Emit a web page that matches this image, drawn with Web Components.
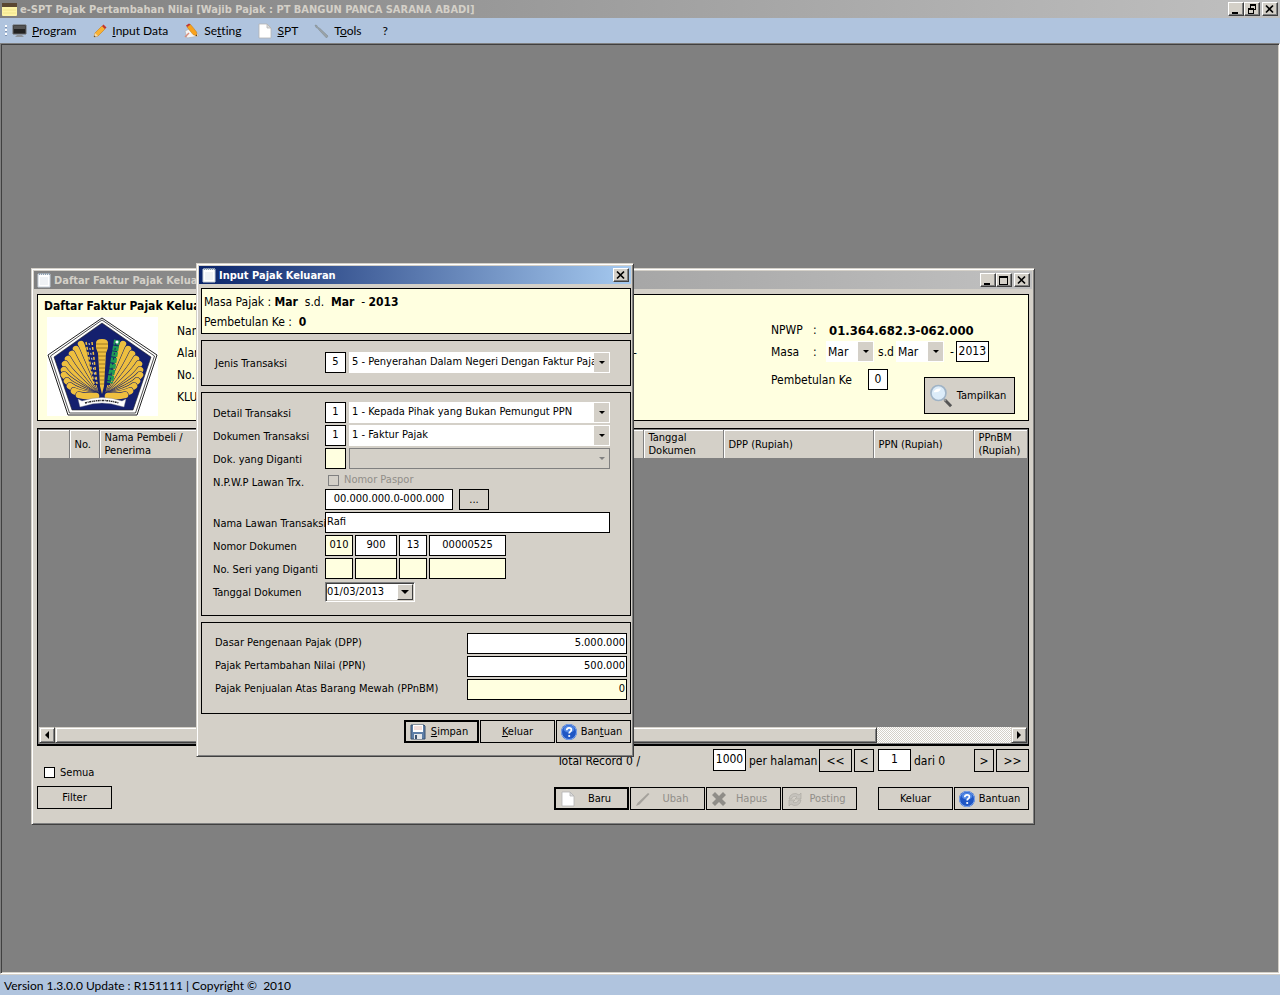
<!DOCTYPE html>
<html lang="id">
<head>
<meta charset="utf-8">
<title>e-SPT Pajak Pertambahan Nilai</title>
<style>
  body {
    margin: 0;
    font-family: "DejaVu Sans Condensed", Roboto, sans-serif;
    font-size: 11px;
    color: #000;
  }
</style>
</head>
<body>
<spt-app></spt-app>

<script>
const ICONS = {
  app: `<rect x="0" y="2" width="15" height="13" rx="1" fill="#fdf3a4"/><path d="M0 2h15v4H0z" fill="#5a4630"/><path d="M1 9h13M1 12h13" stroke="#f0e48c"/>`,
  notepad: `<path d="M2 2h12v13H2z" fill="#fff" stroke="#c6d0da"/><path d="M3.500 1v2M5.500 1v2M7.500 1v2M9.500 1v2M11.500 1v2M13.500 1v2" stroke="#8fa0b0"/><path d="M4 6h8M4 8h8M4 10h8M4 12h8" stroke="#dfe5eb"/>`,
  program: `<path d="M1 2h13v9H1z" fill="#222" stroke="#666"/><path d="M2 3h11v3H2z" fill="#555"/><path d="M5 12h5l2 2H3z" fill="#8f959c"/>`,
  pencil: `<path d="M2 14l1-4 7-7 3 3-7 7z" fill="#f9b233" stroke="#c77f1a" stroke-width=".6"/><path d="M2 14l1-4 3 3z" fill="#f3dcb2"/><path d="M2 14l.4-1.6 1.2 1.2z" fill="#222"/><path d="M10 3l1.500-1.500 3 3L13 6z" fill="#c5352b"/>`,
  setting: `<path d="M1 8l8-4 6 9-12 2z" fill="#f4f4f4" stroke="#aaa" stroke-width=".6"/><path d="M13 13l-4-1.500L3 4l3.500-2.500L12.500 9z" fill="#f9a21a" stroke="#c77f1a" stroke-width=".6"/><path d="M3 4l3.500-2.500L5 .5 2 2.500z" fill="#c5352b"/><path d="M13 13l-1.500-.4 1.200-1.200z" fill="#222"/><path d="M1 14l4-4" stroke="#d98c7a" stroke-width="1.500"/>`,
  page: `<path d="M2 1h8l4 4v10H2z" fill="#fff" stroke="#b4b4b4" stroke-width=".8"/><path d="M10 1v4h4z" fill="#ddd" stroke="#b4b4b4" stroke-width=".8"/>`,
  wrench: `<path d="M1 2l2 .5L3.500 4 6 5.500 14 13l-1.500 2L5 7 3.500 5 2 4.500z" fill="#9aa3a8" stroke="#7d868b" stroke-width=".5"/>`,
  help: `<circle cx="8" cy="8" r="8" fill="#1f56c4"/><circle cx="8" cy="8" r="7.500" fill="none" stroke="#7ea7ee"/><ellipse cx="8" cy="5" rx="5.500" ry="3.500" fill="#4f86e3"/><path d="M5.700 6.200q.2-2.400 2.400-2.400 2.300 0 2.300 2 0 1.200-1.200 1.900-1 .6-1 1.700" fill="none" stroke="#fff" stroke-width="1.700"/><circle cx="8.200" cy="12" r="1.100" fill="#fff"/>`,
  floppy: `<path d="M1 1h13l1 1v13H1z" fill="#5d7fa8" stroke="#3b5270"/><path d="M3 1h10v7H3z" fill="#fff"/><path d="M4 3h8M4 5h8" stroke="#e6bdb6"/><path d="M4 10h8v5H4z" fill="#e4e7ea"/><path d="M5 11h2v4H5z" fill="#3b5270"/>`,
  edit: `<path d="M1 15l1.500-3L13 2l1.500 1L4.500 13.500z" fill="#a5a29c"/>`,
  cross: `<path d="M1 4l3-3 4 4 4-4 3 3-4 4 4 4-3 3-4-4-4 4-3-3 4-4z" fill="#8f8d88"/>`,
  posting: `<path d="M2 8a6 6 0 0 1 10-4l2-2v6H8l2-2a3.500 3.500 0 0 0-5.500 2zM14 9a6 6 0 0 1-10 4l-2 2V9h6l-2 2a3.500 3.500 0 0 0 5.500-2z" fill="#c6c3bd" stroke="#a9a6a0" stroke-width=".6"/>`,
  search: `<path d="M10.500 10.500l4.200 4.300" stroke="#555" stroke-width="2"/><path d="M10 10l1.200 1.200" stroke="#999" stroke-width="1.200"/><circle cx="6.300" cy="6" r="5" fill="#dcecf9" stroke="#9fb3c6" stroke-width="1.100"/><path d="M3 5.500Q4 2.500 8 3q-1 3-5 2.500z" fill="#fff"/>`
};

class SptIcon extends HTMLElement {
  constructor() {
    super();
    this.attachShadow({mode: 'open'});
  }

  connectedCallback() {
    this.shadowRoot.innerHTML = `
      <style>
        :host { display: block; flex: none; width: 16px; height: 16px; white-space: normal; }
        svg { display: block; width: 100%; height: 100%; }
      </style>
      <svg viewBox="0 0 16 16" aria-hidden="true">${ICONS[this.getAttribute('name')]}</svg>
    `;
  }
}

// Coat of arms shown beside the taxpayer's data
class SptEmblem extends HTMLElement {
  constructor() {
    super();
    this.attachShadow({mode: 'open'});
  }

  connectedCallback() {
    // tips of the feathers of the left wing, from the top down
    const tips = [[34, 27], [29, 32], [25, 37], [21, 42], [18, 47], [17, 53], [17, 58], [20, 64], [23, 69], [27, 74], [32, 78]];
    const feathers = tips.map(([x, y]) => {
      const d = `M49 79Q${x + 6} ${y + 22 - Math.round(y / 4)} ${x} ${y}`;
      return `<path d="${d}" stroke="#14206e" stroke-width="7.500"/><path d="${d}" stroke="#eebf3f" stroke-width="6.500"/>`;
    }).join('');

    this.shadowRoot.innerHTML = `
      <style>
        :host { display: block; flex: none; width: 111px; height: 99px; background: #fff; }
        svg { display: block; width: 100%; height: 100%; }
      </style>
      <svg viewBox="0 0 111 99" aria-hidden="true">
        <path d="M55 1l55 37-20 60H21L1 38z" fill="#fff" stroke="#222"/>
        <path d="M55 3l52.500 36-19 57H22.500L3.500 39z" fill="#fff" stroke="#222" stroke-width=".8"/>
        <path d="M55 6l49 34-18 53H25L7 40z" fill="#14206e" stroke="#222" stroke-width=".6"/>
        <g id="wing" fill="none" stroke-linecap="round">${feathers}</g>
        <use href="#wing" transform="matrix(-1 0 0 1 110 0)"/>
        <path d="M37 22h13l2 46h-5z" fill="#14206e"/>
        <path d="M73 22H60l-2 46h5z" fill="#14206e"/>
        <path d="M39 25l8 42M45 25l5 42" fill="none" stroke="#eebf3f" stroke-width="1.500" stroke-dasharray="3 2"/>
        <path d="M42 26l7 40" fill="none" stroke="#fff" stroke-width=".8" stroke-dasharray="2 3"/>
        <path d="M49 26q0-4 6-4t6 4v5l-2 5-2 33-2 8-2-8-2-33-2-5z" fill="#eebf3f"/>
        <path d="M49 27h12M49 31h12M51 35h8M51 39h8M52 43h6M52 47h6M52 51h6M52 55h6M52 59h6M53 63h4M53 67h4" stroke="#8a6a1c" stroke-width=".8"/>
        <path d="M70 23l-7 43" stroke="#1f9b54" stroke-width="6" stroke-dasharray="5 1"/>
        <path d="M69 26l-6 38" stroke="#14206e" stroke-dasharray="2 3"/>
        <circle cx="70" cy="25" r="1.500" fill="#fff"/>
        <path d="M31 82l4 2q20-7 40 0l4-2-2 8-4-1q-18-6-36 0l-4 1z" fill="#fff" stroke="#888" stroke-width=".4"/>
        <path d="M38 86q17-5 34 0" fill="none" stroke="#222" stroke-width="1.500" stroke-dasharray="2 .7 1 .6"/>
      </svg>
    `;
  }
}

class SptButton extends HTMLElement {
  constructor() {
    super();
    this.attachShadow({mode: 'open'});
  }

  connectedCallback() {
    const icon = this.getAttribute('icon');
    this.shadowRoot.innerHTML = `
      <style>
        :host { display: block; flex: none; width: 75px; height: 23px; }
        button {
          display: flex;
          align-items: center;
          justify-content: center;
          width: 100%;
          height: 100%;
          padding: 0 4px;
          border: 1px solid #000;
          border-radius: 0;
          background: #d4d0c8;
          color: inherit;
          font: inherit;
          white-space: nowrap;
        }
        button:disabled { color: #918e88; }
        :host([default]) button { border-width: 2px; }
        span { flex: 1; text-align: center; }
        spt-icon { width: var(--icon-size, 16px); height: var(--icon-size, 16px); }
      </style>
      <button type="button" ${this.hasAttribute('disabled') ? 'disabled' : ''}>
        ${icon ? `<spt-icon name="${icon}"></spt-icon>` : ''}<span><slot></slot></span>
      </button>
    `;
  }
}

class SptTitleBar extends HTMLElement {
  constructor() {
    super();
    this.attachShadow({mode: 'open'});
  }

  connectedCallback() {
    const glyphs = {
      minimize: '<path d="M3 9h6v2H3z"/>',
      maximize: '<path d="M2 2h9v9H2zM3 4h7v6H3z" fill-rule="evenodd"/>',
      restore: '<path d="M5 1h6v6H9v4H3V5h2zM6 3v2h3v1h1V3zM4 7v3h4V7z" fill-rule="evenodd"/>',
      close: '<path d="M3 2.500l7 7M10 2.500l-7 7" stroke="#000" stroke-width="1.700"/>'
    };
    const buttons = this.getAttribute('buttons').split(' ').map(name => `
      <button type="button" class="${name}" aria-label="${name}">
        <svg viewBox="0 0 13 12" aria-hidden="true">${glyphs[name]}</svg>
      </button>`).join('');

    this.shadowRoot.innerHTML = `
      <style>
        :host {
          display: flex;
          align-items: center;
          height: 18px;
          padding: 0 2px;
          background: linear-gradient(to right, #808080, #c0c0c0);
          color: #d4d0c8;
          font-weight: bold;
        }
        :host([active]) { background: linear-gradient(to right, #0a246a, #a6caf0); color: #fff; }
        .caption { flex: 1; margin-left: 2px; white-space: nowrap; overflow: hidden; }
        button {
          box-sizing: border-box;
          width: 16px;
          height: 14px;
          padding: 0;
          border: 1px solid;
          border-color: #fff #404040 #404040 #fff;
          background: #d4d0c8;
          box-shadow: inset -1px -1px #808080;
        }
        .close { margin-left: 2px; }
        svg { display: block; width: 13px; height: 12px; }
      </style>
      <spt-icon name="${this.getAttribute('icon')}"></spt-icon>
      <span class="caption"><slot></slot></span>
      ${buttons}
    `;
  }
}

class SptWindow extends HTMLElement {
  constructor() {
    super();
    this.attachShadow({mode: 'open'});
  }

  connectedCallback() {
    this.shadowRoot.innerHTML = `
      <style>
        :host {
          display: block;
          box-sizing: border-box;
          padding: 1px;
          border: 1px solid;
          border-color: #d4d0c8 #404040 #404040 #d4d0c8;
          background: #d4d0c8;
          box-shadow: inset 1px 1px #fff, inset -1px -1px #808080;
        }
        spt-title-bar { margin: 1px; }
        .body { padding: var(--inset, 4px); }
      </style>
      <spt-title-bar icon="notepad" buttons="${this.getAttribute('buttons')}" ${this.hasAttribute('active') ? 'active' : ''}>${this.getAttribute('caption')}</spt-title-bar>
      <div class="body"><slot></slot></div>
    `;
  }
}

class SptMenuBar extends HTMLElement {
  constructor() {
    super();
    this.attachShadow({mode: 'open'});
  }

  connectedCallback() {
    this.shadowRoot.innerHTML = `
      <style>
        :host {
          display: flex;
          align-items: center;
          gap: 16px;
          height: 25px;
          padding: 0 5px;
          background: #b0c4de;
          font-family: Lato, "Noto Sans", sans-serif;
          font-size: 12px;
          font-variant-ligatures: none;
        }
        .grip { width: 2px; height: 12px; margin-right: -11px; background: repeating-linear-gradient(#fff 0 2px, #8296b4 2px 3px, transparent 3px 4px); }
        a { display: flex; align-items: center; gap: 4px; color: inherit; text-decoration: none; white-space: nowrap; }
        .help { padding-left: 5px; }
      </style>
      <span class="grip"></span>
      <a href="#program"><spt-icon name="program"></spt-icon><span><u>P</u>rogram</span></a>
      <a href="#input"><spt-icon name="pencil"></spt-icon><span><u>I</u>nput Data</span></a>
      <a href="#setting"><spt-icon name="setting"></spt-icon><span>Se<u>t</u>ting</span></a>
      <a href="#spt"><spt-icon name="page"></spt-icon><span><u>S</u>PT</span></a>
      <a href="#tools"><spt-icon name="wrench"></spt-icon><span>T<u>o</u>ols</span></a>
      <a class="help" href="#help">?</a>
    `;
  }
}

// Shared by the two forms; each one puts it into its own shadow root
const fieldStyles = `
  .panel { box-sizing: border-box; border: 1px solid #000; }
  .info { background: #ffffe0; font-size: 12px; }
  input, select {
    box-sizing: border-box;
    height: 21px;
    margin: 0;
    padding: 0 1px 2px;
    border: 1px solid #000;
    border-radius: 0;
    background: #fff;
    color: #000;
    font: inherit;
    min-width: 0;
  }
  input[readonly] { background: #ffffe0; }
  input[type="checkbox"] {
    appearance: none;
    flex: none;
    width: 11px;
    height: 11px;
    padding: 0;
  }
  input[type="checkbox"]:disabled { border-color: #808080; background: transparent; }
  .center { text-align: center; }
  .right { text-align: right; }
  .combo { display: grid; grid-template-columns: minmax(0, 1fr) 16px; height: 21px; background: #fff; }
  .combo select {
    grid-area: 1 / 1;
    width: 100%;
    height: 19px;
    padding: 0 0 0 3px;
    border: 0;
    appearance: none;
    background: transparent;
    line-height: 18px;
  }
  .combo::after { content: ""; grid-area: 1 / 2; margin: 1px 1px 1px 0; background: #d4d0c8; }
  .combo i {
    grid-area: 1 / 2;
    z-index: 1;
    place-self: center;
    border: solid transparent;
    border-width: 3px 3px 0;
    border-top-color: #000;
    pointer-events: none;
  }
  .combo.off { background: #d4d0c8; box-shadow: inset 0 0 0 1px #808080; }
  .combo.off::after { background: transparent; }
  .combo.off i { border-top-color: #808080; }
`;

class FakturForm extends HTMLElement {
  constructor() {
    super();
    this.attachShadow({mode: 'open'});
  }

  connectedCallback() {
    this.shadowRoot.innerHTML = `
      <style>
        ${fieldStyles}
        :host { display: flex; flex-direction: column; gap: 6px; }
        .info { height: 46px; padding: 3px 2px 1px; line-height: 20px; }
        .info p { margin: 0; white-space: pre; }
        .fields {
          display: grid;
          grid-template-columns: 112px minmax(0, 1fr);
          grid-auto-rows: minmax(23px, auto);
          align-items: start;
          padding: 9px 20px 11px 11px;
          line-height: 24px;
        }
        .single { grid-template-columns: 110px minmax(0, 1fr); padding: 11px 20px 10px 13px; }
        .fields label { height: 23px; white-space: nowrap; }
        .line { display: flex; gap: 3px; height: 23px; align-items: flex-start; }
        .line .combo { flex: 1; }
        .code { width: 21px; }
        .serial { gap: 2px; }
        .serial input:nth-child(odd) { width: 28px; padding: 0 0 2px; }
        .serial input:nth-child(2) { width: 42px; }
        .serial input:nth-child(4) { width: 77px; }
        .fields .passport { display: flex; align-items: center; gap: 5px; height: 18px; padding-left: 3px; line-height: 18px; color: #918e88; }
        .npwp { gap: 6px; }
        .npwp input { width: 128px; }
        .npwp spt-button { width: 30px; height: 21px; }
        .wide { flex: 1; }
        .date {
          display: flex;
          box-sizing: border-box;
          width: 90px;
          height: 20px;
          margin-top: 1px;
          border: 1px solid;
          border-color: #808080 #fff #fff #808080;
          background: #fff;
          box-shadow: inset 1px 1px #404040, inset -1px -1px #d4d0c8;
        }
        .date input { flex: 1; height: 18px; padding-bottom: 0; border: 0; background: transparent; }
        .date button {
          display: grid;
          place-items: center;
          width: 16px;
          margin: 1px;
          padding: 0;
          border: 1px solid;
          border-color: #fff #404040 #404040 #fff;
          background: #d4d0c8;
        }
        .date button::before { content: ""; border: solid transparent; border-width: 4px 4px 0; border-top-color: #000; }
        .amounts { grid-template-columns: minmax(0, 1fr) 160px; padding: 10px 3px 11px 13px; line-height: 19px; }
        .amounts input { width: 100%; }
        .actions { display: flex; justify-content: flex-end; gap: 1px; }
      </style>
      <div class="panel info">
        <p>Masa Pajak : <b>Mar</b>  s.d.  <b>Mar</b>  - <b>2013</b></p>
        <p>Pembetulan Ke :  <b>0</b></p>
      </div>

      <div class="panel fields single">
        <label for="jenis">Jenis Transaksi</label>
        <div class="line">
          <input class="code center" id="jenis" value="5">
          <span class="combo"><select aria-label="Jenis Transaksi"><option>5 - Penyerahan Dalam Negeri Dengan Faktur Pajak</option></select><i></i></span>
        </div>
      </div>

      <div class="panel fields">
        <label for="detail">Detail Transaksi</label>
        <div class="line">
          <input class="code center" id="detail" value="1">
          <span class="combo"><select aria-label="Detail Transaksi"><option>1 - Kepada Pihak yang Bukan Pemungut PPN</option></select><i></i></span>
        </div>
        <label for="dokumen">Dokumen Transaksi</label>
        <div class="line">
          <input class="code center" id="dokumen" value="1">
          <span class="combo"><select aria-label="Dokumen Transaksi"><option>1 - Faktur Pajak</option></select><i></i></span>
        </div>
        <label for="diganti">Dok. yang Diganti</label>
        <div class="line">
          <input class="code center" id="diganti" readonly>
          <span class="combo off"><select aria-label="Dok. yang Diganti" disabled></select><i></i></span>
        </div>
        <label for="npwp">N.P.W.P Lawan Trx.</label>
        <div>
          <label class="passport"><input type="checkbox" disabled>Nomor Paspor</label>
          <div class="line npwp">
            <input class="center" id="npwp" value="00.000.000.0-000.000">
            <spt-button>...</spt-button>
          </div>
        </div>
        <label for="nama">Nama Lawan Transaksi</label>
        <div class="line"><input class="wide" id="nama" value="Rafi"></div>
        <label for="nomor">Nomor Dokumen</label>
        <div class="line serial">
          <input class="center" id="nomor" value="010" readonly>
          <input class="center" value="900" aria-label="Kode cabang">
          <input class="center" value="13" aria-label="Tahun">
          <input class="center" value="00000525" aria-label="Nomor urut">
        </div>
        <label for="seri">No. Seri yang Diganti</label>
        <div class="line serial">
          <input id="seri" readonly>
          <input readonly aria-label="Kode cabang diganti">
          <input readonly aria-label="Tahun diganti">
          <input readonly aria-label="Nomor urut diganti">
        </div>
        <label for="tanggal">Tanggal Dokumen</label>
        <div class="line">
          <span class="date"><input id="tanggal" value="01/03/2013"><button type="button" aria-label="Pilih tanggal"></button></span>
        </div>
      </div>

      <div class="panel fields amounts">
        <label for="dpp">Dasar Pengenaan Pajak (DPP)</label>
        <input class="right" id="dpp" value="5.000.000">
        <label for="ppn">Pajak Pertambahan Nilai (PPN)</label>
        <input class="right" id="ppn" value="500.000">
        <label for="ppnbm">Pajak Penjualan Atas Barang Mewah (PPnBM)</label>
        <input class="right" id="ppnbm" value="0" readonly>
      </div>

      <div class="actions">
        <spt-button icon="floppy" default><u>S</u>impan</spt-button>
        <spt-button><u>K</u>eluar</spt-button>
        <spt-button icon="help">Ban<u>t</u>uan</spt-button>
      </div>
    `;
  }
}

class FakturList extends HTMLElement {
  constructor() {
    super();
    this.attachShadow({mode: 'open'});
  }

  connectedCallback() {
    this.shadowRoot.innerHTML = `
      <style>
        ${fieldStyles}
        :host { display: flex; flex-direction: column; }
        .info { height: 127px; padding: 2px 13px 0 9px; }
        h2 { margin: 0 0 2px -3px; font-size: 12px; line-height: 18px; }
        .head { display: flex; }
        .head input { padding-bottom: 1px; }
        .taxpayer { display: grid; grid-template-columns: 60px 400px; grid-auto-rows: 22px; margin: 3px 0 0 19px; line-height: 22px; }
        .taxpayer span:nth-child(even) { text-align: right; }
        .filter { width: 244px; margin: 2px 0 0 auto; line-height: 23px; white-space: nowrap; }
        .row { display: flex; height: 22px; }
        .row .key { width: 42px; }
        .row .colon { width: 13px; }
        .row .npwp { margin-left: 3px; font-size: 13px; }
        .row .combo { width: 48px; margin-right: 4px; }
        .row .combo select { height: 21px; padding-left: 2px; }
        .row .combo + span { margin-right: 2px; }
        .row .dash { margin-left: 2px; }
        .row input { width: 33px; }
        .bottom { display: flex; justify-content: space-between; align-items: flex-start; margin-top: 6px; }
        .bottom label { display: flex; gap: 16px; line-height: 22px; }
        .bottom input { width: 20px; }
        .bottom spt-button { width: 91px; height: 37px; margin-top: 8px; font-size: 11px; --icon-size: 24px; }

        .grid { display: flex; flex-direction: column; height: 318px; margin-top: 7px; padding: 1px; box-sizing: border-box; border: 1px solid #000; border-bottom-width: 2px; background: #808080; }
        table { width: 100%; table-layout: fixed; border-collapse: collapse; }
        th {
          box-sizing: border-box;
          height: 28px;
          padding: 0 5px;
          background: #d4d0c8;
          border-right: 1px solid #808080;
          box-shadow: inset 1px 1px #fff;
          font-weight: normal;
          line-height: 13px;
          text-align: left;
          white-space: nowrap;
        }
        th:last-child { border-right: 0; }
        .scroll { display: flex; height: 16px; margin-top: auto; background: repeating-conic-gradient(#fff 0 25%, #d4d0c8 0 50%) 0 0 / 2px 2px; }
        .scroll button, .thumb {
          display: grid;
          place-items: center;
          box-sizing: border-box;
          width: 16px;
          padding: 0;
          border: 1px solid;
          border-color: #d4d0c8 #404040 #404040 #d4d0c8;
          background: #d4d0c8;
          box-shadow: inset 1px 1px #fff, inset -1px -1px #808080;
        }
        .scroll .thumb { width: 822px; margin-right: auto; }
        .scroll button::before { content: ""; border: solid transparent; border-width: 4px 0 4px 4px; border-left-color: #000; }
        .scroll .prev::before { border-width: 4px 4px 4px 0; border-right-color: #000; }

        .foot { display: flex; justify-content: space-between; padding-top: 3px; }
        .left { padding-top: 16px; }
        .all { display: flex; align-items: center; gap: 5px; height: 14px; margin: 0 0 7px 7px; }
        .right-side { width: 475px; }
        .pager { display: flex; align-items: flex-start; height: 38px; font-size: 12px; line-height: 24px; white-space: nowrap; }
        .pager input { width: 33px; height: 22px; margin-right: 3px; }
        .pager .total { flex: 1; padding-left: 3px; }
        .pager .per { width: 70px; }
        .pager .of { width: 60px; }
        .pager spt-button { width: 20px; margin-left: 2px; }
        .pager spt-button.far { width: 33px; }
        .pager .per + spt-button { margin-left: 0; }
        .pager spt-button + input { margin-left: 4px; }
        .pager .of + spt-button { margin-left: 0; }
        .actions { display: flex; gap: 1px; }
        .actions .gap { flex: 1; }
      </style>
      <div class="panel info">
        <h2>Daftar Faktur Pajak Keluaran</h2>
        <div class="head">
          <spt-emblem></spt-emblem>
          <div class="taxpayer">
            <span>Nama</span><span></span>
            <span>Alamat</span><span>-</span>
            <span>No. Telp</span><span></span>
            <span>KLU</span><span></span>
          </div>
          <div class="filter">
            <div class="row"><span class="key">NPWP</span><span class="colon">:</span><b class="npwp">01.364.682.3-062.000</b></div>
            <div class="row">
              <span class="key">Masa</span><span class="colon">:</span>
              <span class="combo"><select aria-label="Masa awal"><option>Mar</option></select><i></i></span>
              <span>s.d</span>
              <span class="combo"><select aria-label="Masa akhir"><option>Mar</option></select><i></i></span>
              <span class="dash">-</span>
              <input class="center" value="2013" aria-label="Tahun">
            </div>
            <div class="bottom">
              <label>Pembetulan Ke <input class="center" value="0"></label>
              <spt-button icon="search">Tampilkan</spt-button>
            </div>
          </div>
        </div>
      </div>

      <div class="grid">
        <table>
          <colgroup>
            <col style="width: 30px"><col style="width: 30px"><col>
            <col style="width: 80px"><col style="width: 150px"><col style="width: 100px"><col style="width: 54px">
          </colgroup>
          <thead>
            <tr>
              <th></th><th>No.</th><th>Nama Pembeli /<br>Penerima</th><th>Tanggal<br>Dokumen</th>
              <th>DPP (Rupiah)</th><th>PPN (Rupiah)</th><th>PPnBM<br>(Rupiah)</th>
            </tr>
          </thead>
          <tbody></tbody>
        </table>
        <div class="scroll">
          <button type="button" class="prev" aria-label="Geser kiri"></button>
          <span class="thumb"></span>
          <button type="button" aria-label="Geser kanan"></button>
        </div>
      </div>

      <div class="foot">
        <div class="left">
          <label class="all"><input type="checkbox">Semua</label>
          <spt-button>Filter</spt-button>
        </div>
        <div class="right-side">
          <div class="pager">
            <span class="total">Total Record 0 /</span>
            <input class="center" id="size" value="1000">
            <label class="per" for="size">per halaman</label>
            <spt-button class="far">&lt;&lt;</spt-button>
            <spt-button>&lt;</spt-button>
            <input class="center" id="page" value="1">
            <label class="of" for="page">dari 0</label>
            <spt-button>&gt;</spt-button>
            <spt-button class="far">&gt;&gt;</spt-button>
          </div>
          <div class="actions">
            <spt-button icon="page" default>Baru</spt-button>
            <spt-button icon="edit" disabled>Ubah</spt-button>
            <spt-button icon="cross" disabled>Hapus</spt-button>
            <spt-button icon="posting" disabled>Posting</spt-button>
            <span class="gap"></span>
            <spt-button>Keluar</spt-button>
            <spt-button icon="help">Bantuan</spt-button>
          </div>
        </div>
      </div>
    `;
  }
}

class SptApp extends HTMLElement {
  constructor() {
    super();
    this.attachShadow({mode: 'open'});
  }

  connectedCallback() {
    this.shadowRoot.innerHTML = `
      <style>
        :host { display: flex; flex-direction: column; height: 100vh; overflow: hidden; background: #d4d0c8; }
        main {
          position: relative;
          flex: 1;
          border: 1px solid;
          border-color: #808080 #fff #fff #808080;
          background: #808080;
          box-shadow: inset 1px 1px #404040, inset -1px -1px #d4d0c8;
        }
        /* free-floating child windows */
        spt-window { position: absolute; }
        .list { left: 30px; top: 224px; width: 1004px; --inset: 4px 4px 13px; }
        .form { left: 195px; top: 219px; width: 438px; --inset: 3px 1px 12px 3px; }
        footer {
          height: 20px;
          margin-top: 1px;
          padding-left: 4px;
          background: #b0c4de;
          font-family: Lato, "Noto Sans", sans-serif;
          font-size: 12px;
          line-height: 21px;
          white-space: pre;
        }
      </style>
      <spt-title-bar icon="app" buttons="minimize restore close">e-SPT Pajak Pertambahan Nilai [Wajib Pajak : PT BANGUN PANCA SARANA ABADI]</spt-title-bar>
      <spt-menu-bar></spt-menu-bar>
      <main>
        <spt-window class="list" caption="Daftar Faktur Pajak Keluaran" buttons="minimize maximize close">
          <faktur-list></faktur-list>
        </spt-window>
        <spt-window class="form" caption="Input Pajak Keluaran" buttons="close" active>
          <faktur-form></faktur-form>
        </spt-window>
      </main>
      <footer>Version 1.3.0.0 Update : R151111 | Copyright ©  2010</footer>
    `;
  }
}

customElements.define('spt-icon', SptIcon);
customElements.define('spt-emblem', SptEmblem);
customElements.define('spt-button', SptButton);
customElements.define('spt-title-bar', SptTitleBar);
customElements.define('spt-window', SptWindow);
customElements.define('spt-menu-bar', SptMenuBar);
customElements.define('faktur-form', FakturForm);
customElements.define('faktur-list', FakturList);
customElements.define('spt-app', SptApp);
</script>
</body>
</html>
